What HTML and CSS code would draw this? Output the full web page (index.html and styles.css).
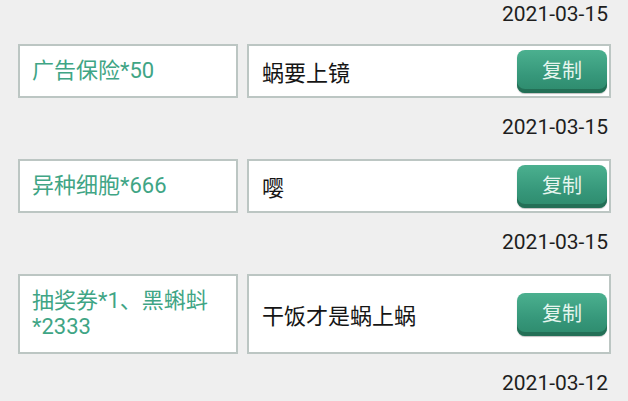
FILE: index.html
```html
<!DOCTYPE html>
<html lang="zh-CN">
<head>
<meta charset="utf-8">
<title>兑换记录</title>
<link rel="stylesheet" href="styles.css">
</head>
<body>
<div class="list">
  <div class="date">2021-03-15</div>

  <div class="row">
    <div class="reward">广告保险*50</div>
    <div class="msg">
      <span class="msg-text">蜗要上镜</span>
      <button class="copy">复制</button>
    </div>
  </div>
  <div class="date">2021-03-15</div>

  <div class="row">
    <div class="reward">异种细胞*666</div>
    <div class="msg">
      <span class="msg-text">嘤</span>
      <button class="copy">复制</button>
    </div>
  </div>
  <div class="date">2021-03-15</div>

  <div class="row">
    <div class="reward">抽奖券*1、黑蝌蚪<br>*2333</div>
    <div class="msg">
      <span class="msg-text">干饭才是蜗上蜗</span>
      <button class="copy">复制</button>
    </div>
  </div>
  <div class="date">2021-03-12</div>
</div>
</body>
</html>
```

FILE: styles.css
```css
html, body {
  margin: 0;
  padding: 0;
  background: #efefef;
}
body {
  font-family: Roboto, "Noto Sans CJK SC", sans-serif;
  width: 628px;
  height: 401px;
  overflow: hidden;
}
.list {
  display: flex;
  flex-direction: column;
  padding: 2px 17px 0 18px;
}
.date {
  align-self: flex-end;
  font-size: 21px;
  line-height: 24px;
  color: #1e1e1e;
  margin-top: 17px;
  margin-bottom: 20px;
  padding-right: 3px;
}
.list > .date:first-child {
  margin-top: 0;
  margin-bottom: 18px;
}
.row {
  display: flex;
  gap: 9px;
  align-items: stretch;
}
.reward {
  box-sizing: border-box;
  width: 220px;
  flex: none;
  background: #fff;
  border: 2px solid #bcc6c3;
  padding: 12px 12px;
  font-size: 22px;
  line-height: 26px;
  color: #3fa585;
  display: flex;
  align-items: center;
}
.msg {
  box-sizing: border-box;
  flex: 1;
  background: #fff;
  border: 2px solid #bcc6c3;
  padding: 0 2px 0 13px;
  display: flex;
  align-items: center;
  justify-content: space-between;
}
.msg-text {
  font-size: 22px;
  color: #151515;
}
.copy {
  width: 90px;
  height: 43px;
  border: none;
  border-radius: 8px;
  background: linear-gradient(#4bb08f, #36977a 60%, #2d8a6c);
  box-shadow: inset 0 -4px 0 #236f56, 0 1px 1px rgba(0,0,0,0.25);
  color: #e6f5ee;
  font-family: "Noto Sans CJK SC", sans-serif;
  font-size: 20px;
  padding: 0 0 3px;
  cursor: pointer;
}
```
